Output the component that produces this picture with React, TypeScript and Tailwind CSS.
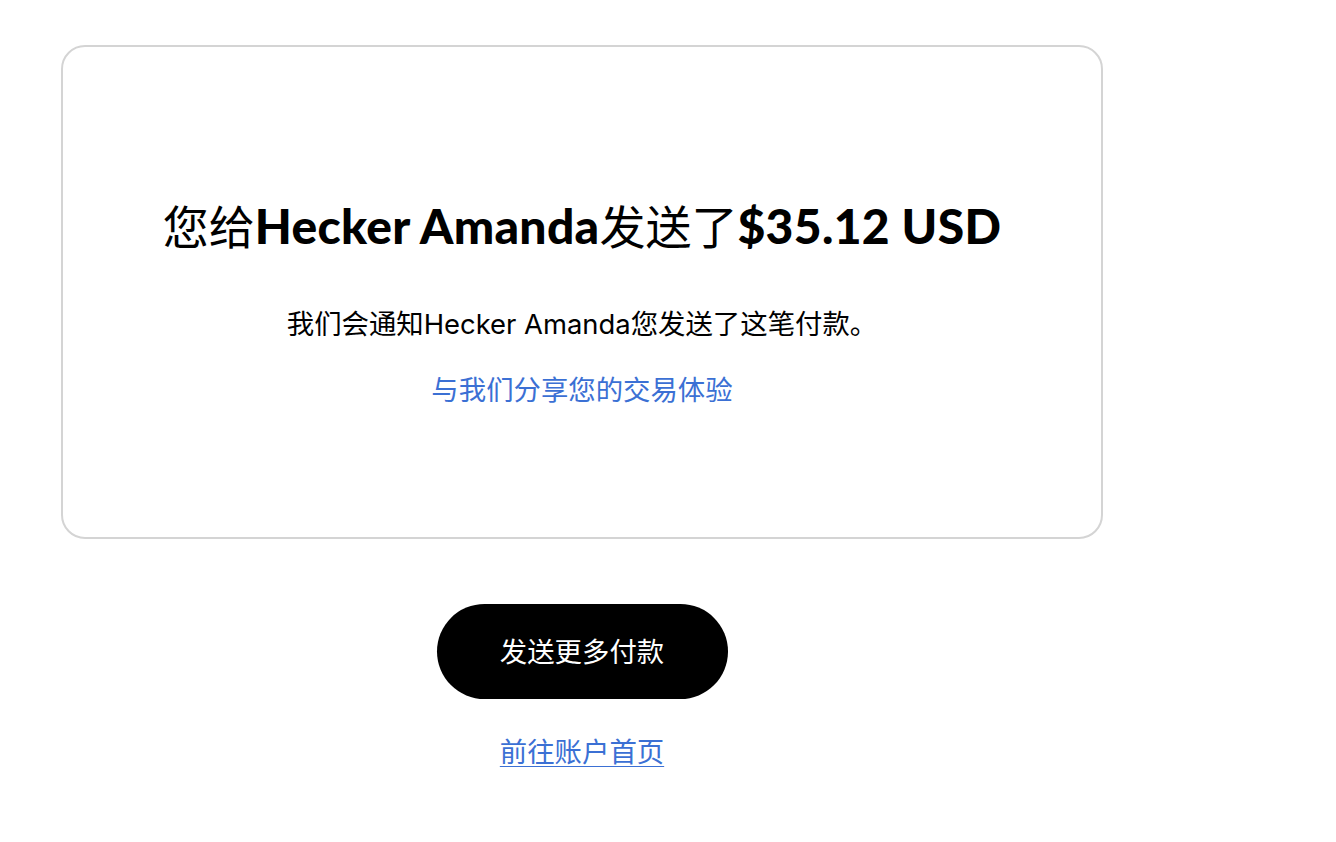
export default function App() {
  const cjk = '"Noto Sans CJK SC", sans-serif';
  return (
    <div className="min-h-screen bg-white font-['Inter','Noto_Sans_CJK_SC',sans-serif] text-black">
      <div className="w-[1042px] ml-[61px] pt-[45px] flex flex-col items-center">
        <section className="w-full h-[494px] border-2 border-[#d4d4d4] rounded-[24px] flex flex-col items-center pt-[150px]">
          <h1 className="text-[46px] leading-[55px] whitespace-nowrap">
            <span className="font-normal font-['Noto_Sans_CJK_SC',sans-serif]">您给</span>
            <span className="text-[48px] font-black tracking-[0.3px] font-['Lato','Noto_Sans_CJK_SC',sans-serif]">Hecker Amanda</span>
            <span className="font-normal font-['Noto_Sans_CJK_SC',sans-serif]">发送了</span>
            <span className="text-[48px] font-black tracking-[0.3px] font-['Lato','Noto_Sans_CJK_SC',sans-serif]">$35.12 USD</span>
          </h1>
          <p className="mt-[51px] text-[27.4px] leading-[36px] whitespace-nowrap">
            我们会通知Hecker Amanda您发送了这笔付款。
          </p>
          <a href="#" className="mt-[28px] text-[27.4px] leading-[36px] text-[#3b70d4]" style={{ fontFamily: cjk }}>
            与我们分享您的交易体验
          </a>
        </section>

        <button className="mt-[65px] w-[291px] h-[95px] rounded-full bg-black text-white text-[27.4px] leading-[36px]">
          发送更多付款
        </button>

        <a href="#" className="mt-[35px] text-[27.4px] leading-[36px] text-[#3b70d4] underline decoration-1 underline-offset-[4px]">
          前往账户首页
        </a>
      </div>
    </div>
  );
}
